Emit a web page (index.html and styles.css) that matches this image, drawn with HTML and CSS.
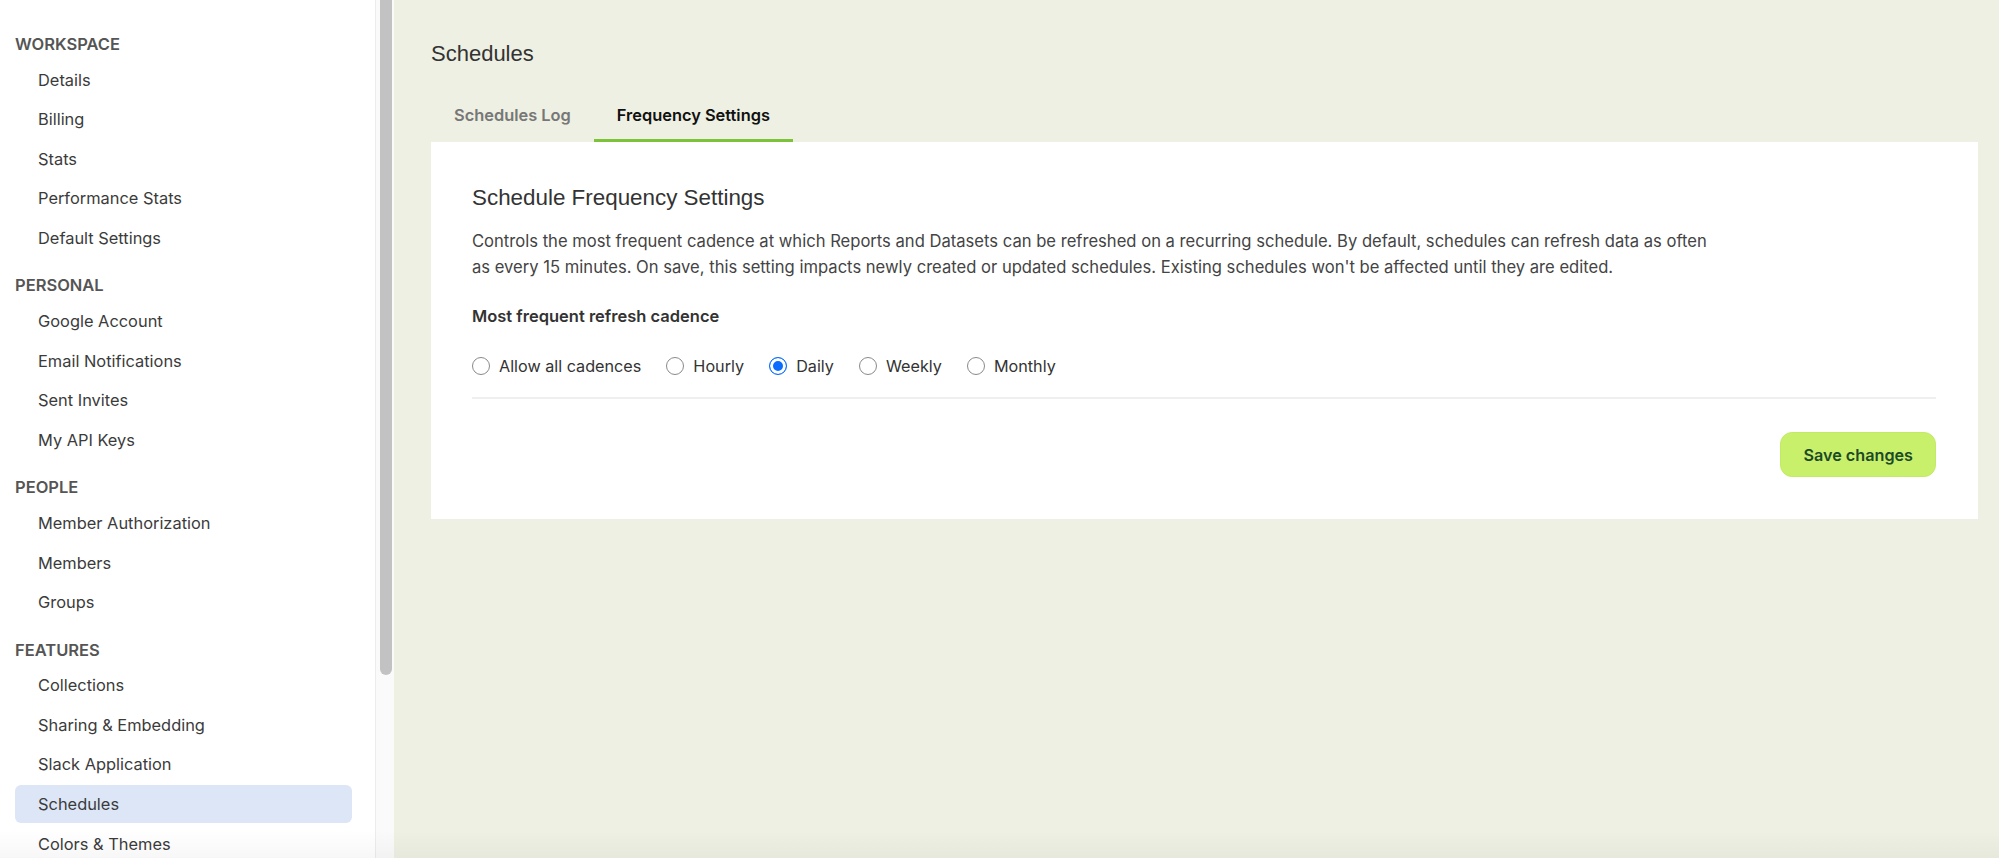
FILE: index.html
```html
<!DOCTYPE html>
<html lang="en">
<head>
<meta charset="utf-8">
<title>Schedules</title>
<link rel="stylesheet" href="styles.css">
</head>
<body>
<div class="app">
  <aside class="sidebar">
    <nav class="nav">
      <div class="group">
        <div class="group-title">WORKSPACE</div>
        <a class="item">Details</a>
        <a class="item">Billing</a>
        <a class="item">Stats</a>
        <a class="item">Performance Stats</a>
        <a class="item">Default Settings</a>
      </div>
      <div class="group">
        <div class="group-title">PERSONAL</div>
        <a class="item">Google Account</a>
        <a class="item">Email Notifications</a>
        <a class="item">Sent Invites</a>
        <a class="item">My API Keys</a>
      </div>
      <div class="group">
        <div class="group-title">PEOPLE</div>
        <a class="item">Member Authorization</a>
        <a class="item">Members</a>
        <a class="item">Groups</a>
      </div>
      <div class="group">
        <div class="group-title">FEATURES</div>
        <a class="item">Collections</a>
        <a class="item">Sharing &amp; Embedding</a>
        <a class="item">Slack Application</a>
        <a class="item active">Schedules</a>
        <a class="item">Colors &amp; Themes</a>
      </div>
    </nav>
    <div class="scrollbar"><div class="thumb"></div></div>
  </aside>
  <main class="main">
    <h1 class="page-title">Schedules</h1>
    <div class="tabs">
      <div class="tab">Schedules Log</div>
      <div class="tab active">Frequency Settings</div>
    </div>
    <section class="card">
      <h2 class="card-title">Schedule Frequency Settings</h2>
      <p class="desc">Controls the most frequent cadence at which Reports and Datasets can be refreshed on a recurring schedule. By default, schedules can refresh data as often as every 15 minutes. On save, this setting impacts newly created or updated schedules. Existing schedules won't be affected until they are edited.</p>
      <div class="field-label">Most frequent refresh cadence</div>
      <div class="radios">
        <label class="radio"><input type="radio" name="cadence"><span>Allow all cadences</span></label>
        <label class="radio"><input type="radio" name="cadence"><span>Hourly</span></label>
        <label class="radio"><input type="radio" name="cadence" checked><span>Daily</span></label>
        <label class="radio"><input type="radio" name="cadence"><span>Weekly</span></label>
        <label class="radio"><input type="radio" name="cadence"><span>Monthly</span></label>
      </div>
      <div class="divider"></div>
      <div class="actions">
        <button class="btn">Save changes</button>
      </div>
    </section>
  </main>
  <div class="bottom-fade"></div>
</div>
</body>
</html>
```
FILE: styles.css
```css
html, body {
  margin: 0;
  padding: 0;
}
body {
  font-family: Inter, "Liberation Sans", Arial, sans-serif;
  color: #333;
}
.app {
  position: relative;
  display: flex;
  height: 858px;
  overflow: hidden;
}
.sidebar {
  display: flex;
  flex-shrink: 0;
  width: 394px;
  background: #fff;
}
.nav {
  width: 375px;
  box-sizing: border-box;
  padding: 34px 23px 0 15px;
  display: flex;
  flex-direction: column;
  gap: 18.5px;
}
.group {
  display: flex;
  flex-direction: column;
  gap: 1.6px;
}
.group-title {
  font-size: 16.5px;
  font-weight: 600;
  line-height: 20px;
  color: #555;
  margin-bottom: 5px;
}
.item {
  height: 38px;
  display: flex;
  align-items: center;
  padding-left: 23px;
  border-radius: 6px;
  font-size: 16.4px;
  color: #3b3b3b;
}
.item.active {
  background: #dce6f7;
}
.scrollbar {
  width: 19px;
  box-sizing: border-box;
  background: #fafafa;
  border-left: 1px solid #ececec;
  padding-left: 4px;
}
.thumb {
  width: 12px;
  height: 675px;
  border-radius: 0 0 6px 6px;
  background: #c2c2c2;
}
.main {
  flex: 1;
  background: #edf0e2;
  padding: 40px 21px 0 37px;
}
.page-title {
  margin: 0;
  font-family: "Liberation Sans", Arial, sans-serif;
  font-size: 22px;
  font-weight: 400;
  line-height: 28px;
  color: #333;
}
.tabs {
  display: flex;
  margin-top: 27px;
}
.tab {
  padding: 10px 23px 14px;
  font-size: 16.4px;
  font-weight: 600;
  line-height: 20px;
  color: #777;
  border-bottom: 3px solid transparent;
}
.tab.active {
  color: #111;
  border-bottom-color: #7cc33a;
}
.card {
  background: #fff;
  padding: 42px 42px 42px 41px;
}
.card-title {
  margin: 0;
  font-family: "Liberation Sans", Arial, sans-serif;
  font-size: 22.4px;
  font-weight: 400;
  line-height: 28px;
  color: #333;
}
.desc {
  margin: 16px 0 0;
  max-width: 1245px;
  font-size: 16.6px;
  line-height: 26px;
  color: #444;
}
.field-label {
  margin-top: 25px;
  font-size: 16.5px;
  font-weight: 600;
  line-height: 22px;
  color: #333;
}
.radios {
  display: flex;
  align-items: center;
  gap: 25px;
  margin-top: 28px;
  height: 22px;
}
.radio {
  display: flex;
  align-items: center;
  gap: 9px;
  font-size: 16.2px;
  color: #333;
}
.radio input {
  appearance: none;
  -webkit-appearance: none;
  width: 18px;
  height: 18px;
  margin: 0;
  border: 1px solid #8a8a8a;
  border-radius: 50%;
  background: #fff;
}
.radio input:checked {
  border-color: #0a6cff;
  background: #0a6cff;
  box-shadow: inset 0 0 0 3px #fff;
}
.divider {
  margin-top: 20px;
  border-top: 2px solid #efefef;
}
.actions {
  display: flex;
  justify-content: flex-end;
  margin-top: 33px;
}
.btn {
  height: 45px;
  padding: 0 22px;
  border: 1px solid #c3ea66;
  border-radius: 12px;
  background: #c9f06b;
  color: #1c4a26;
  font-family: inherit;
  font-size: 16.2px;
  font-weight: 600;
}
.bottom-fade {
  position: absolute;
  left: 0;
  right: 0;
  bottom: 0;
  height: 28px;
  background: linear-gradient(to bottom, rgba(0, 0, 0, 0), rgba(0, 0, 0, 0.03));
  pointer-events: none;
}
```
